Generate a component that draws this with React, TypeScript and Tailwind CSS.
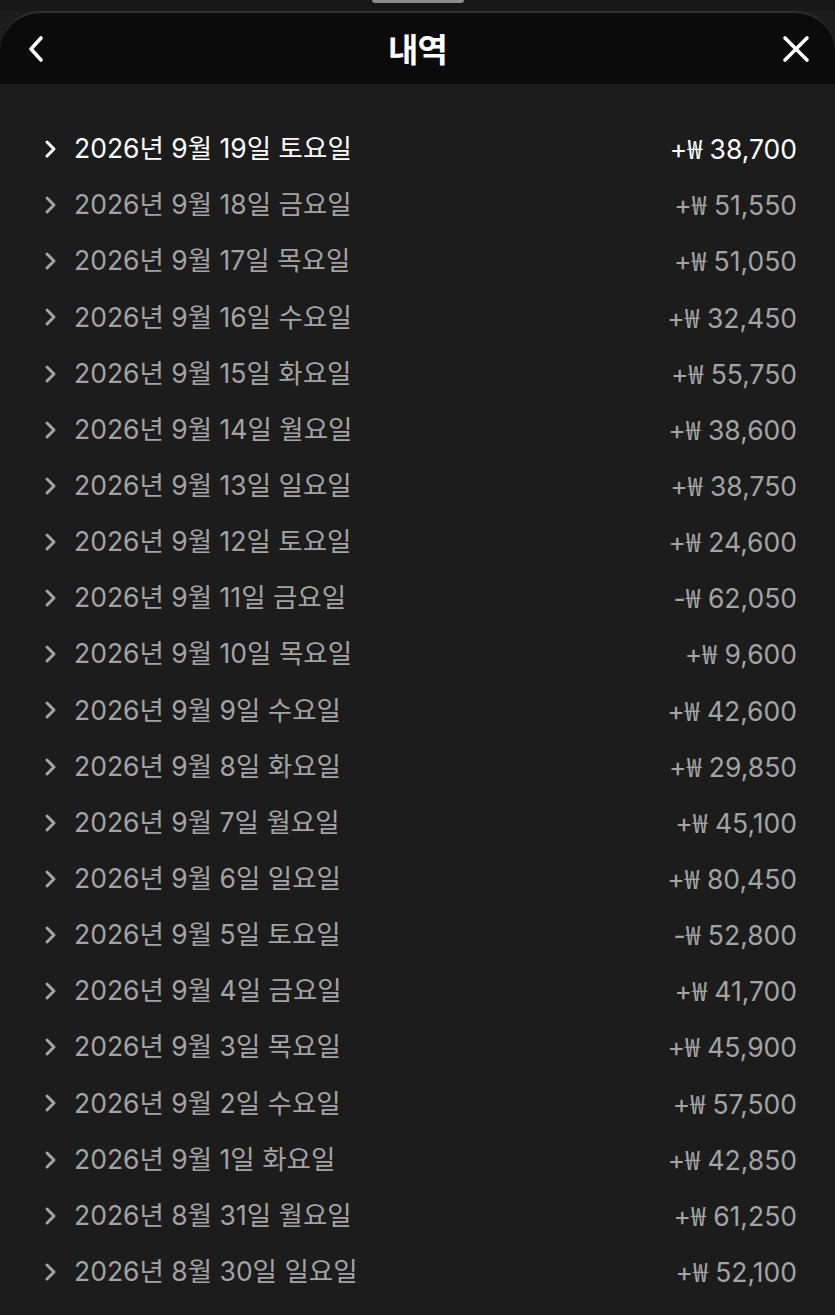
const rows = [
  { date: "2026년 9월 19일 토요일", sign: "+", value: "38,700" },
  { date: "2026년 9월 18일 금요일", sign: "+", value: "51,550" },
  { date: "2026년 9월 17일 목요일", sign: "+", value: "51,050" },
  { date: "2026년 9월 16일 수요일", sign: "+", value: "32,450" },
  { date: "2026년 9월 15일 화요일", sign: "+", value: "55,750" },
  { date: "2026년 9월 14일 월요일", sign: "+", value: "38,600" },
  { date: "2026년 9월 13일 일요일", sign: "+", value: "38,750" },
  { date: "2026년 9월 12일 토요일", sign: "+", value: "24,600" },
  { date: "2026년 9월 11일 금요일", sign: "-", value: "62,050" },
  { date: "2026년 9월 10일 목요일", sign: "+", value: "9,600" },
  { date: "2026년 9월 9일 수요일", sign: "+", value: "42,600" },
  { date: "2026년 9월 8일 화요일", sign: "+", value: "29,850" },
  { date: "2026년 9월 7일 월요일", sign: "+", value: "45,100" },
  { date: "2026년 9월 6일 일요일", sign: "+", value: "80,450" },
  { date: "2026년 9월 5일 토요일", sign: "-", value: "52,800" },
  { date: "2026년 9월 4일 금요일", sign: "+", value: "41,700" },
  { date: "2026년 9월 3일 목요일", sign: "+", value: "45,900" },
  { date: "2026년 9월 2일 수요일", sign: "+", value: "57,500" },
  { date: "2026년 9월 1일 화요일", sign: "+", value: "42,850" },
  { date: "2026년 8월 31일 월요일", sign: "+", value: "61,250" },
  { date: "2026년 8월 30일 일요일", sign: "+", value: "52,100" },
];

export default function App() {
  return (
    <div
      className="min-h-[1315px] w-[835px] bg-[#1c1c1c] overflow-hidden"
      style={{ fontFamily: 'Inter, "Noto Sans CJK KR", sans-serif' }}
    >
      {/* Sheet handle strip */}
      <div className="h-[11px] bg-[#181818] flex justify-center">
        <div className="w-[92px] h-[3px] bg-[#8c8c8c] rounded-b-sm" />
      </div>

      {/* Header */}
      <div className="h-[73px] bg-[#0b0b0b] rounded-t-[40px] border-t-2 border-[#2e2e2e] flex items-center justify-between px-[24px] relative">
        <button className="w-[24px] h-[30px] flex items-center justify-center text-white">
          <svg width="20" height="28" viewBox="0 0 20 28" fill="none" stroke="currentColor" strokeWidth="3.6" strokeLinecap="round" strokeLinejoin="round">
            <path d="M15 3 L5 14 L15 25" />
          </svg>
        </button>
        <h1
          className="absolute left-1/2 -translate-x-1/2 text-white text-[33px] font-bold tracking-tight"
          style={{ fontFamily: '"Noto Sans CJK KR", sans-serif' }}
        >
          내역
        </h1>
        <button className="w-[30px] h-[30px] flex items-center justify-center text-white">
          <svg width="28" height="28" viewBox="0 0 28 28" fill="none" stroke="currentColor" strokeWidth="3.6" strokeLinecap="round">
            <path d="M3 3 L25 25 M25 3 L3 25" />
          </svg>
        </button>
      </div>

      {/* List */}
      <div className="pt-[37px] pl-[44px] pr-[38px]">
        {rows.map((row, i) => (
          <div
            key={row.date}
            className={`h-[56.15px] flex items-center justify-between ${i === 0 ? "text-white" : "text-[#a3a3a3]"}`}
          >
            <div className="flex items-center">
              <svg width="14" height="20" viewBox="0 0 14 20" fill="none" stroke="currentColor" strokeWidth="3" strokeLinecap="round" strokeLinejoin="round" className="mr-[16px]">
                <path d="M3 3 L10 10 L3 17" />
              </svg>
              <span className="text-[26.5px]">{row.date}</span>
            </div>
            <span className="text-[26.5px]">
              {row.sign}
              <span style={{ fontFamily: '"Noto Sans CJK KR", sans-serif' }}>₩</span> {row.value}
            </span>
          </div>
        ))}
      </div>
    </div>
  );
}
